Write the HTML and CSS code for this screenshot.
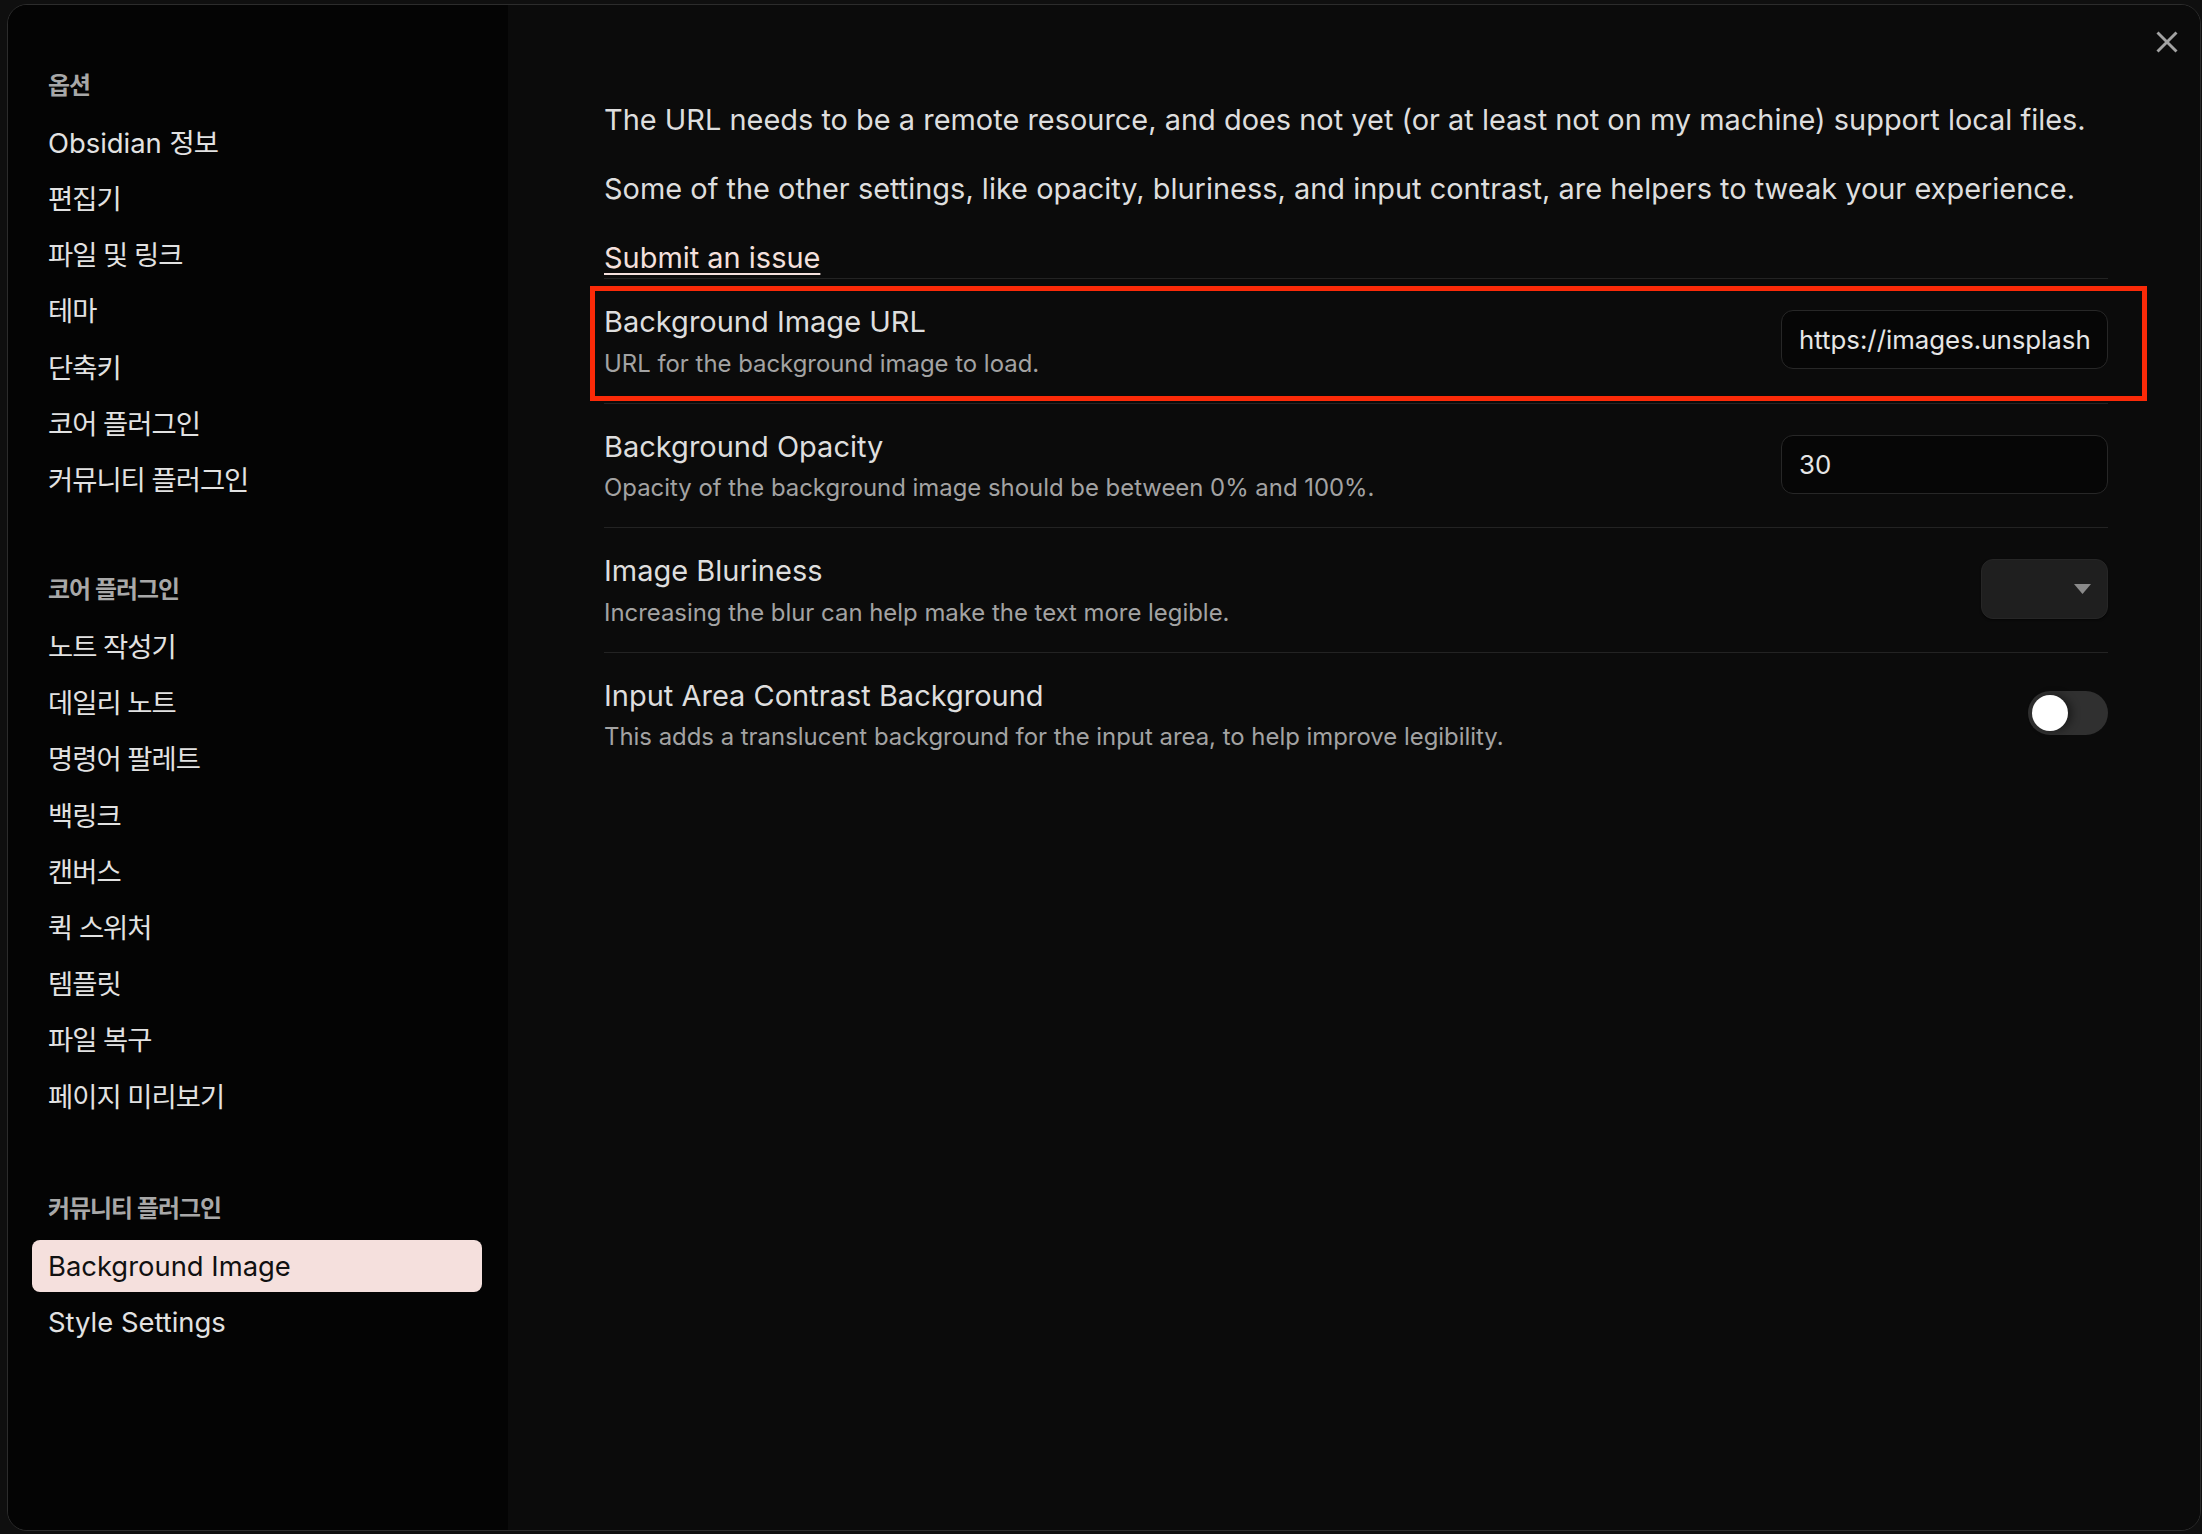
FILE: index.html
```html
<!DOCTYPE html>
<html lang="ko">
<head>
<meta charset="utf-8">
<title>설정</title>
<link rel="stylesheet" href="styles.css">
</head>
<body>
<div class="modal">
  <button class="close" aria-label="닫기">
    <svg viewBox="0 0 22 22" width="22" height="22"><path d="M1.5 1.5 L20.5 20.5 M20.5 1.5 L1.5 20.5" stroke="#a3a3a3" stroke-width="2.9" fill="none"/></svg>
  </button>
  <nav class="sidebar">
    <div class="group">
      <div class="group-title"><span class="ko">옵션</span></div>
      <div class="nav-item">Obsidian <span class="ko">정보</span></div>
      <div class="nav-item"><span class="ko">편집기</span></div>
      <div class="nav-item"><span class="ko">파일 및 링크</span></div>
      <div class="nav-item"><span class="ko">테마</span></div>
      <div class="nav-item"><span class="ko">단축키</span></div>
      <div class="nav-item"><span class="ko">코어 플러그인</span></div>
      <div class="nav-item"><span class="ko">커뮤니티 플러그인</span></div>
    </div>
    <div class="group group-core">
      <div class="group-title"><span class="ko">코어 플러그인</span></div>
      <div class="nav-item"><span class="ko">노트 작성기</span></div>
      <div class="nav-item"><span class="ko">데일리 노트</span></div>
      <div class="nav-item"><span class="ko">명령어 팔레트</span></div>
      <div class="nav-item"><span class="ko">백링크</span></div>
      <div class="nav-item"><span class="ko">캔버스</span></div>
      <div class="nav-item"><span class="ko">퀵 스위처</span></div>
      <div class="nav-item"><span class="ko">템플릿</span></div>
      <div class="nav-item"><span class="ko">파일 복구</span></div>
      <div class="nav-item"><span class="ko">페이지 미리보기</span></div>
    </div>
    <div class="group group-community">
      <div class="group-title"><span class="ko">커뮤니티 플러그인</span></div>
      <div class="nav-item active">Background Image</div>
      <div class="nav-item">Style Settings</div>
    </div>
  </nav>
  <main class="content">
    <p>The URL needs to be a remote resource, and does not yet (or at least not on my machine) support local files.</p>
    <p>Some of the other settings, like opacity, bluriness, and input contrast, are helpers to tweak your experience.</p>
    <p><a class="link" href="#">Submit an issue</a></p>

    <div class="setting highlighted">
      <div class="info">
        <div class="name">Background Image URL</div>
        <div class="desc">URL for the background image to load.</div>
      </div>
      <input class="text-input control" type="text" value="https://images.unsplash.com/photo">
      <div class="annotation"></div>
    </div>

    <div class="setting">
      <div class="info">
        <div class="name">Background Opacity</div>
        <div class="desc">Opacity of the background image should be between 0% and 100%.</div>
      </div>
      <input class="text-input control" type="text" value="30">
    </div>

    <div class="setting">
      <div class="info">
        <div class="name">Image Bluriness</div>
        <div class="desc">Increasing the blur can help make the text more legible.</div>
      </div>
      <div class="dropdown control">
        <svg class="caret" viewBox="0 0 17 10" width="17" height="10"><path d="M0 0 H17 L8.5 10 Z" fill="#8a8a8a"/></svg>
      </div>
    </div>

    <div class="setting">
      <div class="info">
        <div class="name">Input Area Contrast Background</div>
        <div class="desc">This adds a translucent background for the input area, to help improve legibility.</div>
      </div>
      <div class="toggle control"><div class="knob"></div></div>
    </div>
  </main>
</div>
</body>
</html>
```

FILE: styles.css
```css
* { box-sizing: border-box; }

html, body {
  margin: 0;
  padding: 0;
  width: 2202px;
  height: 1534px;
  overflow: hidden;
  background: #0f0f0f;
  font-family: Inter, "Noto Sans CJK KR", sans-serif;
}

.modal {
  position: relative;
  margin: 4px 1px 0 7px;
  width: 2194px;
  height: 1527px;
  border: 1px solid #2c2c2c;
  border-radius: 20px;
  overflow: hidden;
  display: flex;
  background: #0b0b0b;
}

.close {
  position: absolute;
  top: 26px;
  right: 22px;
  width: 22px;
  height: 22px;
  padding: 0;
  border: 0;
  background: none;
  display: flex;
}

.sidebar {
  width: 500px;
  flex: none;
  background: #040404;
  padding: 46.9px 26px 0 24px;
}

.group-core { margin-top: 50.3px; }
.group-community { margin-top: 52.2px; }

.group-title {
  height: 64.9px;
  padding-top: 2.8px;
  line-height: 62.1px;
  padding-left: 16px;
  font-size: 23.9px;
  font-weight: 600;
  color: #a8a8a8;
}

.ko { letter-spacing: -1px; }

.nav-item {
  height: 52px;
  line-height: 52px;
  margin-bottom: 4.2px;
  padding: 0 16px;
  font-size: 27.4px;
  color: #e2e2e2;
  border-radius: 8px;
  white-space: nowrap;
}

.nav-item.active {
  background: #f5e0dd;
  color: #111;
}

.content {
  flex: 1;
  padding: 95.4px 92px 0 96px;
  background: #0b0b0b;
  color: #dedede;
}

.content p {
  margin: 0 0 29px;
  font-size: 28.95px;
  line-height: 40px;
  white-space: nowrap;
}

.content p:last-of-type { margin-bottom: 0; }

.link {
  color: #f5e0dd;
  text-decoration: underline;
  text-decoration-thickness: 2px;
  text-underline-offset: 5px;
}

.setting {
  position: relative;
  display: flex;
  align-items: center;
  border-top: 1px solid #232323;
  padding: 22px 0 19px;
}

.info { flex: 1; }

.name {
  font-size: 29px;
  line-height: 42px;
  color: #dedede;
}

.desc {
  margin-top: 0.5px;
  font-size: 23.9px;
  line-height: 40px;
  color: #a3a3a3;
  white-space: nowrap;
}

.control { margin-bottom: 6px; }

.text-input {
  width: 327px;
  height: 59px;
  padding: 0 16px 0 17px;
  border: 1.5px solid #272727;
  border-radius: 12px;
  background: #060606;
  color: #e6e6e6;
  font-family: Inter, "Noto Sans CJK KR", sans-serif;
  font-size: 25.8px;
  outline: none;
}

.dropdown {
  position: relative;
  width: 127px;
  height: 60px;
  border-radius: 12px;
  background: #1f1f1f;
  border: 1px solid #262626;
  box-shadow: 0 1px 2px rgba(0,0,0,0.6);
}

.caret {
  position: absolute;
  right: 16px;
  top: 24px;
}

.toggle {
  position: relative;
  width: 80px;
  height: 44px;
  border-radius: 22px;
  background: #303030;
}

.knob {
  position: absolute;
  left: 4px;
  top: 4px;
  width: 36px;
  height: 36px;
  border-radius: 50%;
  background: #fff;
  box-shadow: 4px 0 8px rgba(0,0,0,0.45);
}

.annotation {
  position: absolute;
  left: -14px;
  right: -39px;
  top: 7px;
  bottom: 2px;
  border: 5px solid #fb2a08;
  pointer-events: none;
}
```
